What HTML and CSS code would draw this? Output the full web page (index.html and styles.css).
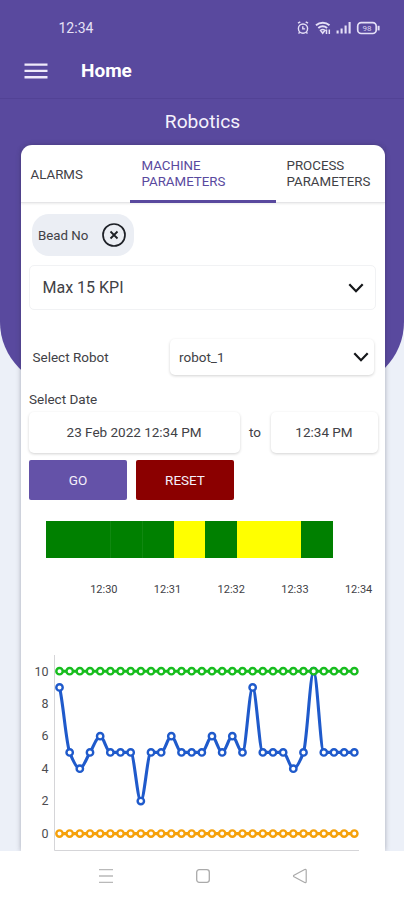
FILE: index.html
```html
<!DOCTYPE html>
<html lang="en">
<head>
<meta charset="utf-8">
<title>Home</title>
<link rel="stylesheet" href="styles.css">
</head>
<body>
<div class="screen">
  <header class="header">
    <div class="status">
      <span class="clock">12:34</span>
      <svg class="status-icons" width="84" height="16" viewBox="0 0 84 16" fill="none" stroke="#e4dff6" stroke-width="1.4">
        <circle cx="6" cy="8.6" r="4.6"/><path d="M1 3.2 3.3 1.8M11 3.2 8.7 1.8M5.800 6.300v2.600h2.300M2.800 12.200 1.500 13.500M9.200 12.200l1.300 1.300"/>
        <path d="M19 5.200c4-3.300 9.500-3.300 13.500 0M21.300 8c2.800-2.200 6-2.200 8.800 0" stroke-width="2.100"/><path d="M23.500 10.300c1.500-1.100 3-1.100 4.400 0l-2.200 3zM29.500 14V9.500M32.300 9.500V14" stroke-width="1.500"/>
        <path d="M40.600 13.600v-3M44.600 13.600V8.500M48.600 13.600V5.500M52.600 13.600V2" stroke-width="2.100"/>
        <rect x="60.700" y="2.700" width="18.500" height="10.800" rx="3.500" stroke-width="1.700"/><path d="M81.600 5.800v4.600" stroke-width="2"/>
        <text class="battery" x="70" y="11">98</text>
      </svg>
    </div>
    <div class="appbar">
      <svg width="24" height="18" viewBox="0 0 24 18" stroke="#efeafa" stroke-width="2.400"><path d="M.5 2.600h23M.5 8.900h23M.5 15.200h23"/></svg>
      <h1 class="title">Home</h1>
    </div>
  </header>
  <h2 class="section-title">Robotics</h2>
  <main class="card">
    <nav class="tabs">
      <span class="tab">ALARMS</span>
      <span class="tab tab-active">MACHINE<br>PARAMETERS</span>
      <span class="tab tab-last">PROCESS<br>PARAMETERS</span>
    </nav>
    <div class="chip">
      <span>Bead No</span>
      <svg width="26" height="26" viewBox="0 0 26 26" fill="none" stroke="#1d2026"><circle cx="13" cy="13" r="11" stroke-width="1.700"/><path d="m9.500 9.500 7 7m0-7-7 7" stroke-width="1.800"/></svg>
    </div>
    <div class="select kpi">
      <span>Max 15 KPI</span>
      <svg width="16" height="10" viewBox="0 0 16 10" fill="none" stroke="#15171a" stroke-width="2.200"><path d="m1.300 1.300 6.700 6.900 6.700-6.900"/></svg>
    </div>
    <div class="robot-row">
      <span class="label">Select Robot</span>
      <div class="select robot">
        <span>robot_1</span>
        <svg width="16" height="10" viewBox="0 0 16 10" fill="none" stroke="#15171a" stroke-width="2.200"><path d="m1.300 1.300 6.700 6.900 6.700-6.900"/></svg>
      </div>
    </div>
    <div class="label date-label">Select Date</div>
    <div class="date-row">
      <div class="field date-from">23 Feb 2022 12:34 PM</div>
      <span class="to">to</span>
      <div class="field date-to">12:34 PM</div>
    </div>
    <div class="buttons">
      <button class="btn go">GO</button>
      <button class="btn reset">RESET</button>
    </div>
    <div class="timeline">
      <i class="ok wide"></i><i class="ok split"></i><i class="ok split"></i><i class="warn"></i><i class="ok"></i><i class="warn wide"></i><i class="ok"></i>
    </div>
    <div class="times"><span>12:30</span><span>12:31</span><span>12:32</span><span>12:33</span><span>12:34</span></div>
    <svg class="chart" id="chart" width="363" height="206" viewBox="21 645 363 206"></svg>
  </main>
  <footer class="navbar">
    <svg width="16" height="16" viewBox="0 0 16 16" stroke="#b9b9b9" stroke-width="1.300"><path d="M1 1.700h14M1 8h14M1 14.300h14"/></svg>
    <svg width="16" height="16" viewBox="0 0 16 16" fill="none" stroke="#aaa" stroke-width="1.300"><rect x="1.700" y="1.700" width="12.600" height="12.600" rx="2.500"/></svg>
    <svg width="16" height="16" viewBox="0 0 16 16" fill="none" stroke="#aaa" stroke-width="1.200" stroke-linejoin="round"><path d="M2 7.200 12.700 1.500q1.500-.5 1.500 1v11q0 1.500-1.500 1L2 8.800q-1-.8 0-1.600z"/></svg>
  </footer>
</div>
<script src="chart.js"></script>
</body>
</html>
```
FILE: styles.css
```css
* { box-sizing: border-box; }
body { margin: 0; font-family: Roboto, "Liberation Sans", sans-serif; color: #414146; }
.screen { position: relative; width: 404px; height: 900px; overflow: hidden; background: #ecf0f8; display: flex; flex-direction: column; isolation: isolate; }
.screen::before { content: ""; position: absolute; z-index: -1; top: 0; left: 0; right: 0; height: 387px; background: #59499e; border-radius: 0 0 65px 65px; }
.header { height: 99px; flex: none; border-bottom: 1px solid #524295; }
.status { height: 44px; padding: 12px 22px 0 58.500px; display: flex; justify-content: space-between; align-items: center; }
.clock { color: #e6e1f6; font-size: 14px; line-height: 16px; }
.status-icons { margin-right: 1px; }
.battery { fill: #d9d2ef; stroke: none; font-size: 8px; text-anchor: middle; }
.appbar { height: 54px; padding-left: 24px; display: flex; align-items: center; gap: 33px; }
.title { margin: 0; color: #fff; font-size: 19px; font-weight: 700; line-height: 24px; }
.section-title { margin: 0; height: 46px; padding-left: 1px; flex: none; text-align: center; color: #f5f2fc; font-size: 19.200px; line-height: 46px; font-weight: 400; }
.card { width: 364px; height: 706px; flex: none; margin-left: 20.500px; background: #fff; border-radius: 11px 11px 0 0; box-shadow: 0 0 5px rgba(40, 40, 60, .35); display: flex; flex-direction: column; }
.tabs { height: 58px; flex: none; display: flex; font-size: 13.300px; line-height: 16px; border-bottom: 1px solid #e5e5e7; box-shadow: 0 1px 2px rgba(0, 0, 0, .08); }
.tab { width: 109px; display: flex; align-items: center; padding: 2px 0 0 10px; }
.tab-active { width: 146px; padding-left: 12px; margin-bottom: -1px; color: #59499e; border-bottom: 3px solid #59499e; }
.tab-last { padding: 0 0 0 11px; }
.chip { width: 102px; height: 42px; flex: none; margin: 11px 0 0 11.500px; padding: 0 7px 0 6px; border-radius: 17px; background: #ebeef4; display: flex; align-items: center; justify-content: space-between; font-size: 13.300px; }
.select { display: flex; align-items: center; justify-content: space-between; border-radius: 5px; }
.kpi { width: 347px; height: 45px; flex: none; margin: 9px 0 0 8px; padding: 0 11px 0 13px; border: 1px solid #f1f2f4; font-size: 16px; }
.robot-row { height: 37px; flex: none; margin-top: 28px; padding-left: 12px; display: flex; align-items: center; }
.label { font-size: 13.500px; }
.robot { width: 204px; height: 36px; margin-left: auto; margin-right: 10.500px; padding: 0 5px 0 9px; font-size: 13.500px; box-shadow: 0 1px 3px rgba(0, 0, 0, .18); }
.date-label { height: 18px; line-height: 18px; margin: 15px 0 0 8.500px; }
.date-row { height: 42px; margin: 3px 0 0 8px; display: flex; align-items: center; font-size: 13.500px; }
.field { height: 41px; line-height: 41px; text-align: center; border-radius: 5px; box-shadow: 0 1px 3px rgba(0, 0, 0, .18); }
.date-from { width: 211px; }
.to { width: 31px; text-align: center; }
.date-to { width: 107px; }
.buttons { margin: 7px 0 0 8.500px; display: flex; gap: 9px; }
.btn { height: 40px; width: 98px; padding: 0; border: 0; border-radius: 2px; color: #f4effb; font: 400 13.500px Roboto, sans-serif; }
.go { background: #6452a8; }
.reset { background: #8b0000; }
.timeline { height: 37px; flex: none; margin: 21px 0 0 25.500px; display: flex; }
.timeline i { width: 31.900px; }
.timeline .wide { width: 63.800px; }
.ok { background: #008000; }
.warn { background: #ff0; }
.split { border-left: 1px solid #108810; }
.times { margin: 24px 0 0 51.500px; display: flex; font-size: 11px; line-height: 16px; }
.times span { width: 63.700px; flex: none; text-align: center; }
.chart { margin-top: auto; display: block; font-size: 12.500px; }
.chart text { fill: #4c4c50; text-anchor: end; }
.axis { stroke: #d5d5d8; fill: none; }
.series { fill: none; stroke-width: 3.100; }
.dot { fill: #fff; stroke-width: 2.400; }
.navbar { position: relative; height: 49px; flex: none; background: #fff; display: flex; justify-content: center; align-items: center; gap: 81px; padding-left: 1px; }
```
FILE: chart.js
```js
const chart = document.getElementById('chart');
const left = 59.5, step = 10.166, zeroY = 833.6, unit = 16.24;
const X = i => left + i * step;
const Y = v => zeroY - v * unit;

function add(name, attrs, text) {
  const node = document.createElementNS('http://www.w3.org/2000/svg', name);
  for (const key in attrs) node.setAttribute(key, attrs[key]);
  if (text !== undefined) node.textContent = text;
  chart.appendChild(node);
}

// Monotone cubic path: flat tangents at every local extreme.
function curve(values) {
  const slope = values.map((v, i) => {
    if (i === 0 || i === values.length - 1) return 0;
    const a = v - values[i - 1], b = values[i + 1] - v;
    return a * b <= 0 ? 0 : 2 * a * b / (a + b);
  });
  slope[0] = (values[1] - values[0]) * 0.6;
  let d = `M${X(0)} ${Y(values[0])}`;
  for (let i = 1; i < values.length; i++) {
    d += `C${X(i - 1) + step / 3} ${Y(values[i - 1] + slope[i - 1] / 3)} ${X(i) - step / 3} ${Y(values[i] - slope[i] / 3)} ${X(i)} ${Y(values[i])}`;
  }
  return d;
}

function series(values, color) {
  add('path', { class: 'series', d: curve(values), stroke: color });
  values.forEach((v, i) => add('circle', { class: 'dot', cx: X(i), cy: Y(v), r: 3.2, stroke: color }));
}

add('path', { class: 'axis', d: 'M54.500 655V850.500H359' });
for (let v = 0; v <= 10; v += 2) add('text', { x: 48.5, y: Y(v) + 4.3 }, v);
series([9, 5, 4, 5, 6, 5, 5, 5, 2, 5, 5, 6, 5, 5, 5, 6, 5, 6, 5, 9, 5, 5, 5, 4, 5, 10, 5, 5, 5, 5], '#1f5acb');
series(Array(30).fill(10), '#17bd1e');
series(Array(30).fill(0), '#f5a10b');
```
